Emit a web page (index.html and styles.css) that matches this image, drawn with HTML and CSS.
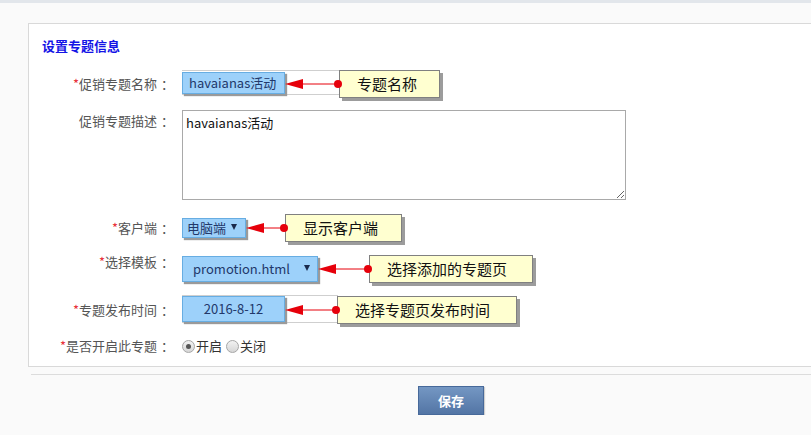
FILE: index.html
```html
<!DOCTYPE html>
<html lang="zh-CN">
<head>
<meta charset="utf-8">
<title>设置专题信息</title>
<link rel="stylesheet" href="styles.css">
</head>
<body>
<div class="topbar"></div>
<div class="panel">
  <h2 class="title">设置专题信息</h2>

  <div class="row r1">
    <div class="lbl"><i>*</i>促销专题名称<span class="colon">：</span></div>
    <div class="ctrl">
      <div class="field f1"><span class="blue b1">havaianas活动</span></div>
      <svg class="arrow pull1" width="54" height="14" viewBox="0 0 54 14"><path d="M0 7 L18 2 L18 12 Z" fill="#e6000b"/><line x1="18" y1="7" x2="52" y2="7" stroke="#e6000b" stroke-width="1"/><circle cx="53" cy="7" r="4" fill="#e6000b"/></svg>
      <div class="note n1">专题名称</div>
    </div>
  </div>

  <div class="row r2">
    <div class="lbl">促销专题描述<span class="colon">：</span></div>
    <div class="ctrl">
      <textarea class="desc">havaianas活动</textarea>
    </div>
  </div>

  <div class="row r3">
    <div class="lbl"><i>*</i>客户端<span class="colon">：</span></div>
    <div class="ctrl">
      <div class="blue sel s1"><span>电脑端</span><span class="caret"></span></div>
      <svg class="arrow" width="39" height="14" viewBox="0 0 39 14"><path d="M0 7 L18 2 L18 12 Z" fill="#e6000b"/><line x1="18" y1="7" x2="37" y2="7" stroke="#e6000b" stroke-width="1"/><circle cx="38" cy="7" r="4" fill="#e6000b"/></svg>
      <div class="note n3">显示客户端</div>
    </div>
  </div>

  <div class="row r4">
    <div class="lbl"><i>*</i>选择模板<span class="colon">：</span></div>
    <div class="ctrl">
      <div class="blue sel s2"><span>promotion.html</span><span class="caret"></span></div>
      <svg class="arrow" width="51" height="14" viewBox="0 0 51 14"><path d="M0 7 L18 2 L18 12 Z" fill="#e6000b"/><line x1="18" y1="7" x2="49" y2="7" stroke="#e6000b" stroke-width="1"/><circle cx="50" cy="7" r="4" fill="#e6000b"/></svg>
      <div class="note n4">选择添加的专题页</div>
    </div>
  </div>

  <div class="row r5">
    <div class="lbl"><i>*</i>专题发布时间<span class="colon">：</span></div>
    <div class="ctrl">
      <div class="field f5"><span class="blue b5">2016-8-12</span></div>
      <svg class="arrow pull5" width="52" height="14" viewBox="0 0 52 14"><path d="M0 7 L18 2 L18 12 Z" fill="#e6000b"/><line x1="18" y1="7" x2="50" y2="7" stroke="#e6000b" stroke-width="1"/><circle cx="51" cy="7" r="4" fill="#e6000b"/></svg>
      <div class="note n5">选择专题页发布时间</div>
    </div>
  </div>

  <div class="row r6">
    <div class="lbl"><i>*</i>是否开启此专题<span class="colon">：</span></div>
    <div class="ctrl radios">
      <span class="radio on"></span><span class="rtext">开启</span>
      <span class="radio gap"></span><span class="rtext">关闭</span>
    </div>
  </div>
</div>
<div class="sep"></div>
<div class="actions"><button class="save">保存</button></div>
</body>
</html>
```

FILE: styles.css
```css
html, body {
  margin: 0;
  padding: 0;
  background: #fafafa;
  font-family: "Noto Sans CJK SC", "Noto Sans", sans-serif;
  font-size: 13px;
  color: #333;
}

.topbar {
  height: 3px;
  background: #e2e6eb;
}

.panel {
  margin: 20px 0 0 28px;
  background: #fff;
  border: 1px solid #d9d9d9;
  border-right: none;
  padding: 12px 0 10px 0;
}

.title {
  margin: 0 0 12px 13px;
  font-size: 13px;
  line-height: 20px;
  font-weight: bold;
  color: #1414e6;
}

.row {
  display: flex;
  align-items: center;
}

.lbl {
  width: 141px;
  margin-right: 12px;
  text-align: right;
  line-height: 20px;
  color: #555;
  white-space: nowrap;
}

.lbl i {
  font-style: normal;
  color: #e8303a;
}

.colon {
  display: inline-block;
  padding-left: 4px;
  margin-right: -4px;
}

.ctrl {
  display: flex;
  align-items: center;
}

.r1 { height: 31px; }
.r2 { height: 90px; margin-top: 11px; align-items: flex-start; }
.r2 .lbl { padding-top: 1px; }
.r3 { height: 31px; margin-top: 12px; }
.r4 { height: 31px; margin-top: 10px; }
.r4 .lbl { align-self: flex-start; margin-top: -1px; }
.r5 { height: 31px; margin-top: 10px; }
.r6 { height: 20px; margin-top: 11px; }

.field {
  box-sizing: border-box;
  display: flex;
  align-items: flex-start;
  background: #fff;
  border: 1px solid #cfcfcf;
  border-left: none;
}

.f1 { width: 158px; height: 25px; margin-top: -2px; }
.f5 { width: 156px; height: 28px; margin-top: -1px; }

.blue {
  box-sizing: border-box;
  background: #9dd1fa;
  border: 1px solid #67ade2;
  box-shadow: 2px 2px 1px #9a9a9a;
  color: #22386a;
  white-space: nowrap;
}

.b1 {
  width: 103px;
  height: 22px;
  margin-top: 1px;
  padding-left: 6px;
  line-height: 20px;
  font-size: 13px;
}

.b5 {
  width: 103px;
  height: 26px;
  line-height: 24px;
  text-align: center;
  font-size: 13px;
}

.sel {
  display: flex;
  align-items: center;
  justify-content: space-between;
}

.s1 {
  width: 64px;
  height: 20px;
  padding: 0 8px 0 4px;
}

.s2 {
  width: 136px;
  height: 26px;
  padding: 0 7px 0 10px;
}

.caret {
  width: 0;
  height: 0;
  border-left: 3px solid transparent;
  border-right: 3px solid transparent;
  border-top: 6px solid #1a2a4c;
  margin-top: -2px;
}

.arrow {
  display: block;
  overflow: visible;
  position: relative;
  z-index: 2;
}

.pull1 { margin-left: -55px; }
.pull5 { margin-left: -53px; }

.note {
  box-sizing: border-box;
  height: 28px;
  line-height: 26px;
  border: 1px solid #808080;
  background: #ffffd0;
  box-shadow: 3px 3px 0 #9c9c9c;
  color: #111;
  font-size: 15px;
  padding-left: 17px;
  white-space: nowrap;
  position: relative;
  z-index: 1;
}

.n1 { width: 101px; }
.n3 { width: 117px; }
.n4 { width: 164px; }
.n5 { width: 180px; }

.desc {
  box-sizing: border-box;
  width: 444px;
  height: 90px;
  margin: 0;
  border: 1px solid #a9a9a9;
  padding: 2px 3px;
  font-family: "Noto Sans CJK SC", "Noto Sans", sans-serif;
  font-size: 13px;
  line-height: 20px;
  color: #111;
  background: #fff;
  resize: both;
}

.radios {
  height: 20px;
}

.radio {
  box-sizing: border-box;
  width: 13px;
  height: 13px;
  border-radius: 50%;
  border: 1px solid #a6a6a6;
  background: linear-gradient(#f2f2f2, #d6d6d6);
  display: flex;
  align-items: center;
  justify-content: center;
}

.radio.on::after {
  content: "";
  width: 5px;
  height: 5px;
  border-radius: 50%;
  background: #555;
}

.radio.gap { margin-left: 4px; }

.rtext {
  margin-left: 1px;
  color: #333;
  line-height: 20px;
}

.sep {
  height: 1px;
  background: #dcdcdc;
  margin: 7px 0 0 31px;
}

.actions {
  padding: 11px 0 0 418px;
}

.save {
  display: block;
  width: 66px;
  height: 29px;
  margin: 0;
  border: 1px solid #47699a;
  background: linear-gradient(#7497c3, #5375a5);
  box-shadow: 1px 1px 1px #cfcfcf;
  color: #fff;
  font-family: "Noto Sans CJK SC", "Noto Sans", sans-serif;
  font-size: 13px;
  font-weight: bold;
  padding: 0;
  cursor: pointer;
}
```
